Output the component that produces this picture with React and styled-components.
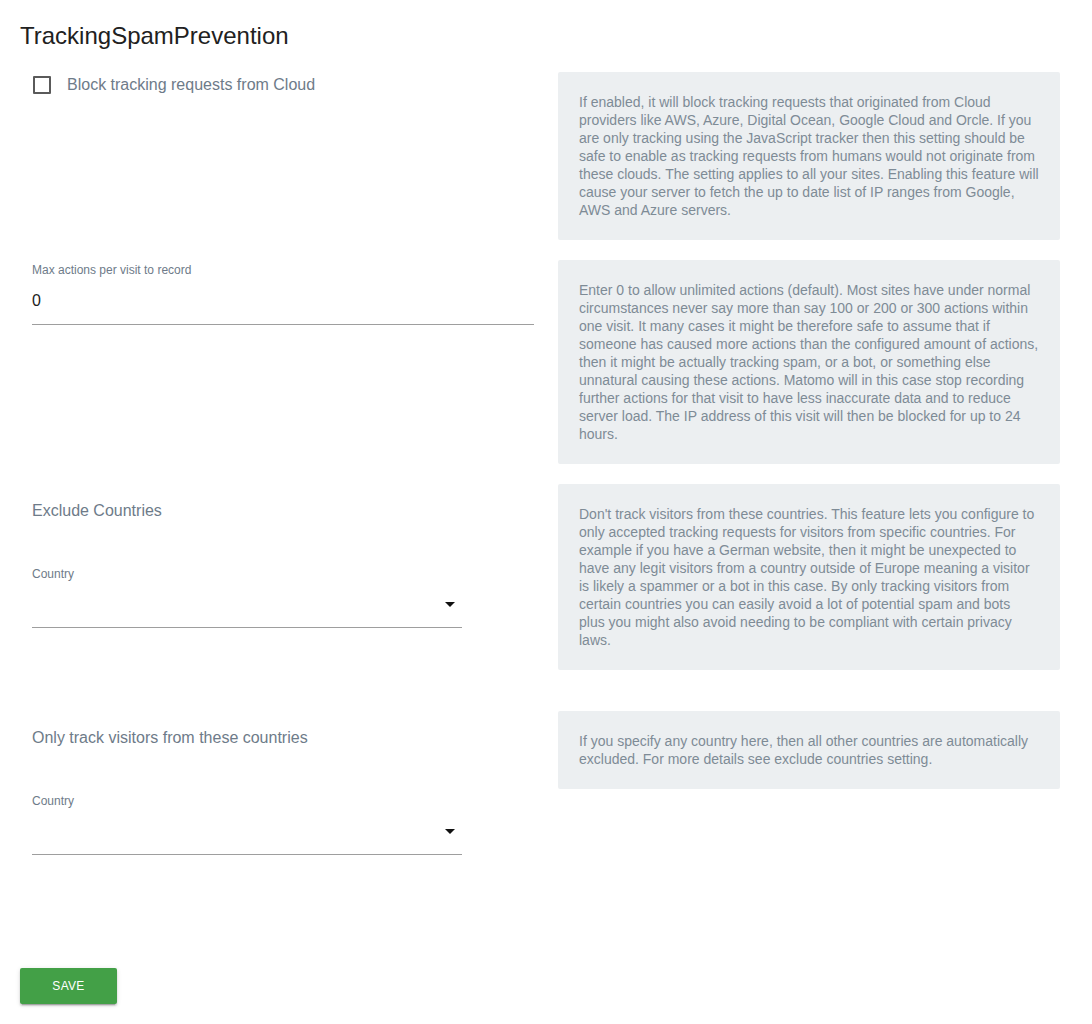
import React from "react";
import styled, { createGlobalStyle } from "styled-components";

const GlobalStyle = createGlobalStyle`
  html, body {
    margin: 0;
    padding: 0;
    background: #ffffff;
  }
  body {
    font-family: "Liberation Sans", Arial, sans-serif;
  }
`;

const Page = styled.div`
  width: 1092px;
  min-height: 1024px;
  box-sizing: border-box;
  padding-top: 21px;
`;

const Title = styled.h2`
  margin: 0 0 21px 20px;
  font-size: 24px;
  font-weight: 400;
  line-height: 30px;
  color: #212121;
`;

const Row = styled.div`
  display: grid;
  grid-template-columns: 502px 502px;
  column-gap: 24px;
  align-items: start;
  padding: 0 32px;
  margin-bottom: ${(p) => p.$after || 20}px;
`;

const Field = styled.div`
  display: flex;
  flex-direction: column;
`;

const CheckRow = styled.label`
  display: flex;
  align-items: center;
  gap: 16px;
  margin-top: 2px;
  cursor: pointer;
`;

const CheckBox = styled.span`
  width: 14px;
  height: 14px;
  margin-left: 1px;
  border: 2px solid #5a5a5a;
  border-radius: 1px;
`;

const CheckLabel = styled.span`
  font-size: 16px;
  line-height: 22px;
  color: #6e7b89;
`;

const SmallLabel = styled.div`
  font-size: 12px;
  line-height: 14px;
  color: #6e7b89;
  margin-top: ${(p) => p.$top || 0}px;
`;

const TextInput = styled.div`
  height: 48px;
  box-sizing: border-box;
  padding-top: 14px;
  font-size: 16px;
  line-height: 20px;
  color: #212121;
  border-bottom: 1px solid #9e9e9e;
`;

const SelectBox = styled.div`
  position: relative;
  height: 44px;
  box-sizing: border-box;
  border-bottom: 1px solid #9e9e9e;
  width: 430px;
  margin-top: 3px;
`;

const Caret = styled.span`
  position: absolute;
  right: 7px;
  top: 18px;
  width: 0;
  height: 0;
  border-left: 5px solid transparent;
  border-right: 5px solid transparent;
  border-top: 5px solid #111;
`;

const Heading = styled.div`
  font-size: 16px;
  line-height: 20px;
  color: #6e7b89;
  margin-top: 17px;
`;

const Help = styled.div`
  background: #eceff1;
  border-radius: 2px;
  padding: 21px;
  font-size: 14px;
  line-height: 18px;
  color: #7e8b96;
`;

const SaveButton = styled.button`
  margin-left: 20px;
  width: 97px;
  height: 36px;
  border: none;
  border-radius: 2px;
  background: #43a047;
  color: #ffffff;
  font-family: "Liberation Sans", Arial, sans-serif;
  font-size: 12px;
  letter-spacing: 0.3px;
  text-transform: uppercase;
  box-shadow: 0 2px 2px 0 rgba(0, 0, 0, 0.14), 0 1px 5px 0 rgba(0, 0, 0, 0.12),
    0 3px 1px -2px rgba(0, 0, 0, 0.2);
  cursor: pointer;
`;

const CountryField = ({ title }) => (
  <Field>
    <Heading>{title}</Heading>
    <SmallLabel $top={46}>Country</SmallLabel>
    <SelectBox>
      <Caret />
    </SelectBox>
  </Field>
);

export default function App() {
  return (
    <Page>
      <GlobalStyle />
      <Title>TrackingSpamPrevention</Title>

      <Row>
        <Field>
          <CheckRow>
            <CheckBox />
            <CheckLabel>Block tracking requests from Cloud</CheckLabel>
          </CheckRow>
        </Field>
        <Help>
          If enabled, it will block tracking requests that originated from Cloud
          providers like AWS, Azure, Digital Ocean, Google Cloud and Orcle. If you
          are only tracking using the JavaScript tracker then this setting should be
          safe to enable as tracking requests from humans would not originate from
          these clouds. The setting applies to all your sites. Enabling this feature
          will cause your server to fetch the up to date list of IP ranges from
          Google, AWS and Azure servers.
        </Help>
      </Row>

      <Row>
        <Field>
          <SmallLabel $top={3}>Max actions per visit to record</SmallLabel>
          <TextInput>0</TextInput>
        </Field>
        <Help>
          Enter 0 to allow unlimited actions (default). Most sites have under normal
          circumstances never say more than say 100 or 200 or 300 actions within one
          visit. It many cases it might be therefore safe to assume that if someone
          has caused more actions than the configured amount of actions, then it
          might be actually tracking spam, or a bot, or something else unnatural
          causing these actions. Matomo will in this case stop recording further
          actions for that visit to have less inaccurate data and to reduce server
          load. The IP address of this visit will then be blocked for up to 24
          hours.
        </Help>
      </Row>

      <Row $after={41}>
        <CountryField title="Exclude Countries" />
        <Help>
          Don't track visitors from these countries. This feature lets you configure
          to only accepted tracking requests for visitors from specific countries.
          For example if you have a German website, then it might be unexpected to
          have any legit visitors from a country outside of Europe meaning a visitor
          is likely a spammer or a bot in this case. By only tracking visitors from
          certain countries you can easily avoid a lot of potential spam and bots
          plus you might also avoid needing to be compliant with certain privacy
          laws.
        </Help>
      </Row>

      <Row $after={113}>
        <CountryField title="Only track visitors from these countries" />
        <Help>
          If you specify any country here, then all other countries are
          automatically excluded. For more details see exclude countries setting.
        </Help>
      </Row>

      <SaveButton>Save</SaveButton>
    </Page>
  );
}
